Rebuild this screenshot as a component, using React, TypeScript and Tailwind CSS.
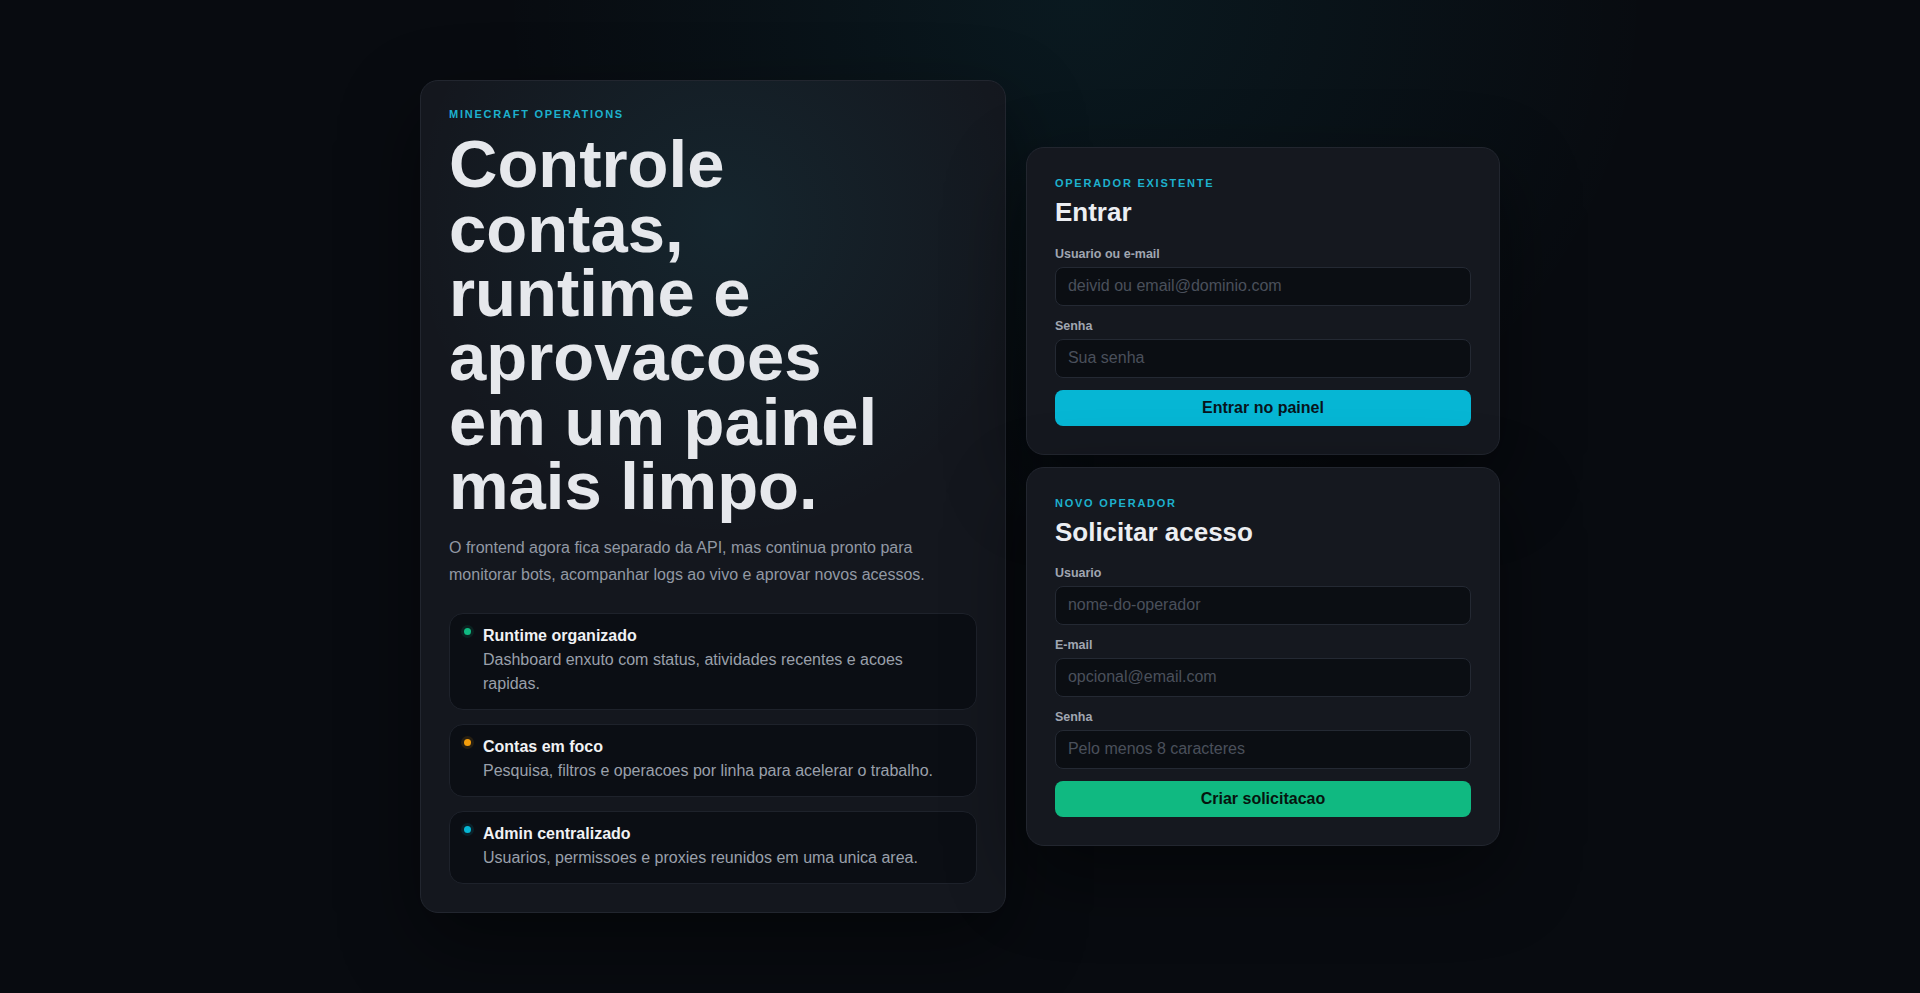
import type { ReactNode } from 'react';

const features = [
  {
    title: 'Runtime organizado',
    text: 'Dashboard enxuto com status, atividades recentes e acoes rapidas.',
    dot: 'bg-[#10b981] shadow-[0_0_0_3px_rgba(16,185,129,0.12)]',
  },
  {
    title: 'Contas em foco',
    text: 'Pesquisa, filtros e operacoes por linha para acelerar o trabalho.',
    dot: 'bg-[#f59e0b] shadow-[0_0_0_3px_rgba(245,158,11,0.12)]',
  },
  {
    title: 'Admin centralizado',
    text: 'Usuarios, permissoes e proxies reunidos em uma unica area.',
    dot: 'bg-[#06b6d4] shadow-[0_0_0_3px_rgba(6,182,212,0.12)]',
  },
];

function Eyebrow({ children }: { children: ReactNode }) {
  return (
    <p className="text-[11px] leading-[14px] font-bold uppercase tracking-[0.16em] text-[#1db1cd]">{children}</p>
  );
}

function Field({ label, placeholder, type = 'text' }: { label: string; placeholder: string; type?: string }) {
  return (
    <label className="flex flex-col gap-[5px]">
      <span className="text-[12.5px] leading-4 font-bold text-[#a0a6b1]">{label}</span>
      <input
        type={type}
        placeholder={placeholder}
        className="h-[39px] w-full rounded-lg border border-[#242933] bg-[#0b0e13] px-3 text-base text-[#e5e7eb] outline-none placeholder:text-[#4a505b] focus:border-[#06b6d4]"
      />
    </label>
  );
}

function AuthCard({
  eyebrow,
  title,
  children,
}: {
  eyebrow: string;
  title: string;
  children: ReactNode;
}) {
  return (
    <section className="rounded-[18px] border border-[#22262f] bg-[#15181f] p-7 shadow-[0_30px_80px_rgba(0,0,0,0.45)]">
      <Eyebrow>{eyebrow}</Eyebrow>
      <h2 className="mt-[7px] text-[26px] leading-[1.2] font-bold text-[#eceef2]">{title}</h2>
      <form className="mt-[17px] flex flex-col gap-3" onSubmit={(e) => e.preventDefault()}>
        {children}
      </form>
    </section>
  );
}

export default function App() {
  return (
    <div className="flex min-h-screen items-center justify-center bg-[#080b10] bg-[radial-gradient(ellipse_at_56%_0%,rgba(34,211,238,0.07),transparent_38%)] px-6 py-10 font-['Liberation_Sans',Arial,sans-serif]">
      <div className="grid w-full max-w-[1080px] grid-cols-[1.236fr_1fr] items-center gap-5">
        <section className="rounded-[18px] border border-[#22262f] bg-[#14171e] bg-[radial-gradient(circle_at_52%_17%,rgba(34,211,238,0.075),transparent_42%)] p-7 shadow-[0_30px_80px_rgba(0,0,0,0.45)]">
          <p className="-mt-px text-[11px] leading-3 font-bold uppercase tracking-[0.16em] text-[#1db1cd]">
            Minecraft Operations
          </p>
          <h1 className="mt-3 max-w-[460px] text-[67px] leading-[0.96] font-bold text-[#e6e8ec]">
            Controle contas, runtime e aprovacoes em um painel mais limpo.
          </h1>
          <p className="mt-4 text-base leading-[1.7] text-[#9299a4]">
            O frontend agora fica separado da API, mas continua pronto para monitorar bots, acompanhar logs ao vivo e
            aprovar novos acessos.
          </p>
          <ul className="mt-6 flex flex-col gap-[14px]">
            {features.map((f) => (
              <li
                key={f.title}
                className="flex gap-3 rounded-[14px] border border-[#1e222b] bg-[#0b0e14] pt-3 pb-[13px] pl-[14px] pr-4"
              >
                <span className={`mt-[2px] h-[7px] w-[7px] shrink-0 rounded-full ${f.dot}`} />
                <div>
                  <h3 className="text-base leading-5 font-bold text-[#f1f2f4]">{f.title}</h3>
                  <p className="mt-0.5 text-base leading-6 text-[#9aa0ab]">{f.text}</p>
                </div>
              </li>
            ))}
          </ul>
        </section>

        <div className="flex flex-col gap-3">
          <AuthCard eyebrow="Operador existente" title="Entrar">
            <Field label="Usuario ou e-mail" placeholder="deivid ou email@dominio.com" />
            <Field label="Senha" placeholder="Sua senha" type="password" />
            <button
              type="submit"
              className="h-9 rounded-lg bg-[#06b6d4] text-base font-bold text-[#08141c] transition-colors hover:bg-[#22c5e0]"
            >
              Entrar no painel
            </button>
          </AuthCard>

          <AuthCard eyebrow="Novo operador" title="Solicitar acesso">
            <Field label="Usuario" placeholder="nome-do-operador" />
            <Field label="E-mail" placeholder="opcional@email.com" type="email" />
            <Field label="Senha" placeholder="Pelo menos 8 caracteres" type="password" />
            <button
              type="submit"
              className="h-9 rounded-lg bg-[#10b981] text-base font-bold text-[#06140e] transition-colors hover:bg-[#22c993]"
            >
              Criar solicitacao
            </button>
          </AuthCard>
        </div>
      </div>
    </div>
  );
}
